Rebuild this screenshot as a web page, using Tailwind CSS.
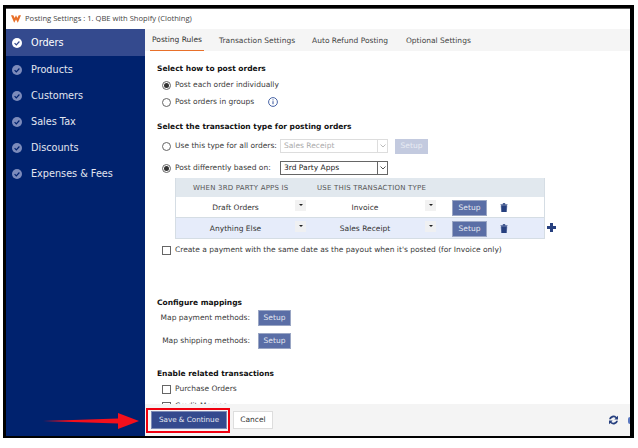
<!DOCTYPE html>
<html lang="en">
<head>
  <meta charset="UTF-8">
  <title>Posting Settings</title>
  <script src="https://cdn.jsdelivr.net/npm/@tailwindcss/browser@4"></script>
</head>
<body class="bg-white font-['DejaVu_Sans',sans-serif] text-[7.5px] text-[#3a3a3a] whitespace-nowrap">
<div class="relative w-[638px] h-[448px] pt-[5px] pl-[3px] overflow-hidden">
  <!-- window -->
  <div class="w-[631px] h-[433px] border-[3px] border-r-[4px] border-b-[2px] border-black bg-white flex flex-col overflow-hidden">
    <!-- title bar -->
    <div class="h-[21px] shrink-0 border-t border-[#555] flex items-center pl-[5px] gap-[4px]">
      <svg width="10" height="8" viewBox="0 0 11 8"><path d="M0 0h2.5l1.5 3 1.5-3 1.5 3 1.5-3H11L7.5 8 5.5 4.5 3.5 8z" fill="#e8702a"/></svg>
      <span class="text-[#444] text-[7.6px] font-['Open_Sans',sans-serif]">Posting Settings : 1. QBE with Shopify (Clothing)</span>
    </div>
    <div class="flex flex-1 min-h-0">
      <!-- sidebar -->
      <div class="w-[139px] shrink-0 bg-[#00226e] text-[#e3e6f0] text-[9.7px]">
        <div class="h-[27px] pt-[1px] bg-[#344a8e] flex items-center pl-[6px] gap-[9px] text-white">
          <svg width="10" height="10" viewBox="0 0 10 10"><circle cx="5" cy="5" r="5" fill="#fff"/><path d="M2.6 5.1l1.7 1.7 3.1-3.3" stroke="#344a8e" stroke-width="1.2" fill="none"/></svg>Orders</div>
        <div class="h-[26px] pt-[2px] flex items-center pl-[6px] gap-[9px]">
          <svg width="10" height="10" viewBox="0 0 10 10"><circle cx="5" cy="5" r="5" fill="#7c8bbb"/><path d="M2.6 5.1l1.7 1.7 3.1-3.3" stroke="#00226e" stroke-width="1.2" fill="none"/></svg>Products</div>
        <div class="h-[26px] pt-[2px] flex items-center pl-[6px] gap-[9px]">
          <svg width="10" height="10" viewBox="0 0 10 10"><circle cx="5" cy="5" r="5" fill="#7c8bbb"/><path d="M2.6 5.1l1.7 1.7 3.1-3.3" stroke="#00226e" stroke-width="1.2" fill="none"/></svg>Customers</div>
        <div class="h-[26px] pt-[2px] flex items-center pl-[6px] gap-[9px]">
          <svg width="10" height="10" viewBox="0 0 10 10"><circle cx="5" cy="5" r="5" fill="#7c8bbb"/><path d="M2.6 5.1l1.7 1.7 3.1-3.3" stroke="#00226e" stroke-width="1.2" fill="none"/></svg>Sales Tax</div>
        <div class="h-[26px] pt-[2px] flex items-center pl-[6px] gap-[9px]">
          <svg width="10" height="10" viewBox="0 0 10 10"><circle cx="5" cy="5" r="5" fill="#7c8bbb"/><path d="M2.6 5.1l1.7 1.7 3.1-3.3" stroke="#00226e" stroke-width="1.2" fill="none"/></svg>Discounts</div>
        <div class="h-[26px] pt-[2px] flex items-center pl-[6px] gap-[9px]">
          <svg width="10" height="10" viewBox="0 0 10 10"><circle cx="5" cy="5" r="5" fill="#7c8bbb"/><path d="M2.6 5.1l1.7 1.7 3.1-3.3" stroke="#00226e" stroke-width="1.2" fill="none"/></svg>Expenses &amp; Fees</div>
      </div>
      <!-- main -->
      <div class="flex-1 min-w-0 flex flex-col">
        <!-- tabs -->
        <div class="h-[22px] shrink-0 bg-[#f5f5f5] flex pl-[5px] text-[7.5px] text-[#444]">
          <div class="w-[54px] pt-[1px] flex items-center justify-center border-b border-[#e8702a] text-[#333]">Posting Rules</div>
          <div class="ml-[15px] pt-[1px] flex items-center">Transaction Settings</div>
          <div class="ml-[17px] pt-[1px] flex items-center">Auto Refund Posting</div>
          <div class="ml-[18px] pt-[1px] flex items-center">Optional Settings</div>
        </div>
        <!-- form -->
        <div class="flex-1 min-h-0 overflow-hidden pl-[12px] pt-[12px]">
          <div class="h-[12px] flex items-center font-bold text-[#111]">Select how to post orders</div>
          <div class="mt-[4px] h-[12px] pl-[5px] flex items-center gap-[4px]">
            <span class="w-[9px] h-[9px] rounded-full border border-[#666] flex items-center justify-center"><span class="w-[5px] h-[5px] rounded-full bg-[#333]"></span></span>
            Post each order individually</div>
          <div class="mt-[5px] h-[12px] pl-[5px] flex items-center gap-[4px]">
            <span class="w-[9px] h-[9px] rounded-full border border-[#666]"></span>
            Post orders in groups
            <svg class="ml-[10px]" width="10" height="10" viewBox="0 0 10 10"><circle cx="5" cy="5" r="4.4" fill="none" stroke="#34539c" stroke-width=".9"/><path d="M5 4.2v3M5 2.4v1" stroke="#34539c" stroke-width="1"/></svg></div>
          <div class="mt-[13px] h-[12px] flex items-center font-bold text-[#111]">Select the transaction type for posting orders</div>

          <div class="mt-[6px] h-[14px] pl-[5px] flex items-center">
            <span class="w-[9px] h-[9px] rounded-full border border-[#666]"></span>
            <span class="ml-[4px] w-[105px]">Use this type for all orders:</span>
            <div class="w-[108px] h-[14px] border border-[#ddd] flex items-center justify-between text-[#aaa] pl-[3px]">Sales Receipt
              <span class="w-[10px] h-full border-l border-[#ddd] flex items-center justify-center"><svg width="6" height="4" viewBox="0 0 6 4"><path d="M.5.5L3 3 5.5.5" stroke="#bbb" fill="none"/></svg></span></div>
            <div class="ml-[7px] w-[33px] h-[15px] bg-[#c3cadf] text-[#e8ebf3] flex items-center justify-center">Setup</div>
          </div>

          <div class="mt-[8px] h-[14px] pl-[5px] flex items-center">
            <span class="w-[9px] h-[9px] rounded-full border border-[#666] flex items-center justify-center"><span class="w-[5px] h-[5px] rounded-full bg-[#333]"></span></span>
            <span class="ml-[4px] w-[105px]">Post differently based on:</span>
            <div class="w-[108px] h-[14px] border border-[#666] flex items-center justify-between text-[#222] pl-[3px]">3rd Party Apps
              <span class="w-[10px] h-full border-l border-[#666] flex items-center justify-center"><svg width="6" height="4" viewBox="0 0 6 4"><path d="M.5.5L3 3 5.5.5" stroke="#555" fill="none"/></svg></span></div>
          </div>

          <!-- rules table -->
          <div class="relative mt-[3px] ml-[18px] w-[370px] border-l border-r border-b border-[#d5dde4]">
            <div class="h-[19px] pt-[1px] bg-[#e1e8ee] flex items-center text-[7px] text-[#555] tracking-[.2px]">
              <span class="ml-[17px] w-[124px]">WHEN 3RD PARTY APPS IS</span>
              <span>USE THIS TRANSACTION TYPE</span>
            </div>
            <div class="h-[21px] pt-[1px] bg-white border-b border-[#d5dde4] flex items-center text-[#333]">
              <span class="w-[119px] text-center">Draft Orders</span>
              <span class="-mt-[5px] w-[11px] h-[11px] bg-[#f2f2f2] flex items-center justify-center"><span class="w-0 h-0 border-x-[2px] border-x-transparent border-t-[2px] border-t-[#222]"></span></span>
              <span class="w-[118px] text-center">Invoice</span>
              <span class="ml-[1px] -mt-[5px] w-[11px] h-[11px] bg-[#f2f2f2] flex items-center justify-center"><span class="w-0 h-0 border-x-[2px] border-x-transparent border-t-[2px] border-t-[#222]"></span></span>
              <span class="ml-[16px] w-[35px] h-[16px] bg-[#5a6ea6] border border-[#9aa6c4] text-[#e4e7f1] flex items-center justify-center">Setup</span>
              <svg class="ml-[13px]" width="8" height="9" viewBox="0 0 8 9"><path d="M.5 1.5h7M3 1.5V.5h2v1M1.2 2.5h5.6L6.3 9H1.7z" fill="#27407f" stroke="#27407f" stroke-width=".6"/></svg>
            </div>
            <div class="h-[20px] pt-[1px] bg-[#e6ecfa] flex items-center text-[#333]">
              <span class="w-[119px] text-center">Anything Else</span>
              <span class="-mt-[5px] w-[11px] h-[11px] bg-[#eff0f2] flex items-center justify-center"><span class="w-0 h-0 border-x-[2px] border-x-transparent border-t-[2px] border-t-[#222]"></span></span>
              <span class="w-[118px] text-center">Sales Receipt</span>
              <span class="ml-[1px] -mt-[5px] w-[11px] h-[11px] bg-[#eff0f2] flex items-center justify-center"><span class="w-0 h-0 border-x-[2px] border-x-transparent border-t-[2px] border-t-[#222]"></span></span>
              <span class="ml-[16px] w-[35px] h-[16px] bg-[#5a6ea6] border border-[#9aa6c4] text-[#e4e7f1] flex items-center justify-center">Setup</span>
              <svg class="ml-[13px]" width="8" height="9" viewBox="0 0 8 9"><path d="M.5 1.5h7M3 1.5V.5h2v1M1.2 2.5h5.6L6.3 9H1.7z" fill="#27407f" stroke="#27407f" stroke-width=".6"/></svg>
            </div>
            <svg class="absolute left-[371px] top-[45px]" width="9" height="9" viewBox="0 0 9 9"><path d="M3 0h3v3h3v3H6v3H3V6H0V3h3z" fill="#27407f"/></svg>
          </div>

          <div class="mt-[5px] h-[12px] pl-[5px] flex items-center gap-[4px]">
            <span class="w-[9px] h-[9px] border border-[#666]"></span>
            Create a payment with the same date as the payout when it's posted (for Invoice only)</div>

          <div class="mt-[41px] h-[12px] flex items-center font-bold text-[#111]">Configure mappings</div>
          <div class="h-[18px] flex items-center">
            <span class="w-[93px] text-right">Map payment methods:</span>
            <span class="ml-[8px] w-[33px] h-[16px] bg-[#5a6ea6] border border-[#9aa6c4] text-[#e4e7f1] flex items-center justify-center">Setup</span>
          </div>
          <div class="mt-[5px] h-[18px] flex items-center">
            <span class="w-[93px] text-right">Map shipping methods:</span>
            <span class="ml-[8px] w-[33px] h-[16px] bg-[#5a6ea6] border border-[#9aa6c4] text-[#e4e7f1] flex items-center justify-center">Setup</span>
          </div>

          <div class="mt-[18px] h-[12px] flex items-center font-bold text-[#111]">Enable related transactions</div>
          <div class="mt-[3px] h-[12px] pl-[5px] flex items-center gap-[4px]">
            <span class="w-[9px] h-[9px] border border-[#666]"></span>Purchase Orders</div>
          <div class="mt-[5px] h-[12px] pl-[5px] flex items-center gap-[4px]">
            <span class="w-[9px] h-[9px] border border-[#666]"></span>Credit Memos</div>
        </div>
        <!-- footer -->
        <div class="h-[32px] shrink-0 bg-[#f4f4f4] flex items-center pl-[6px]">
          <div class="w-[76px] h-[18px] bg-[#344a8e] border border-[#7d8bb5] text-[#e4e7f1] text-[7.2px] flex items-center justify-center">Save &amp; Continue</div>
          <div class="ml-[6px] w-[40px] h-[18px] bg-white border border-[#ddd] text-[#333] flex items-center justify-center">Cancel</div>
          <svg class="ml-auto mr-[9px]" width="11" height="10" viewBox="0 0 11 10"><path d="M1 4.2A4.4 4.4 0 0 1 8.6 2L10 .8v3.6H6.4l1.2-1.3A3 3 0 0 0 2.8 4.2zM10 5.8A4.4 4.4 0 0 1 2.4 8L1 9.2V5.6h3.6L3.4 6.9a3 3 0 0 0 4.8-1.1z" fill="#27407f"/></svg>
          <span class="w-[2px] h-[7px] rounded-l-full bg-[#5a78c0]"></span>
        </div>
      </div>
    </div>
  </div>
  <!-- annotation overlay -->
  <div class="absolute left-[146px] top-[408px] w-[84px] h-[25px] border-[2px] border-[#f0000f]"></div>
  <svg class="absolute left-[43px] top-[412px]" width="97" height="18" viewBox="0 0 97 18"><path d="M0 9L75 6.5V1L96 9 75 17V11.5z" fill="#f4101c"/></svg>
</div>
</body>
</html>
